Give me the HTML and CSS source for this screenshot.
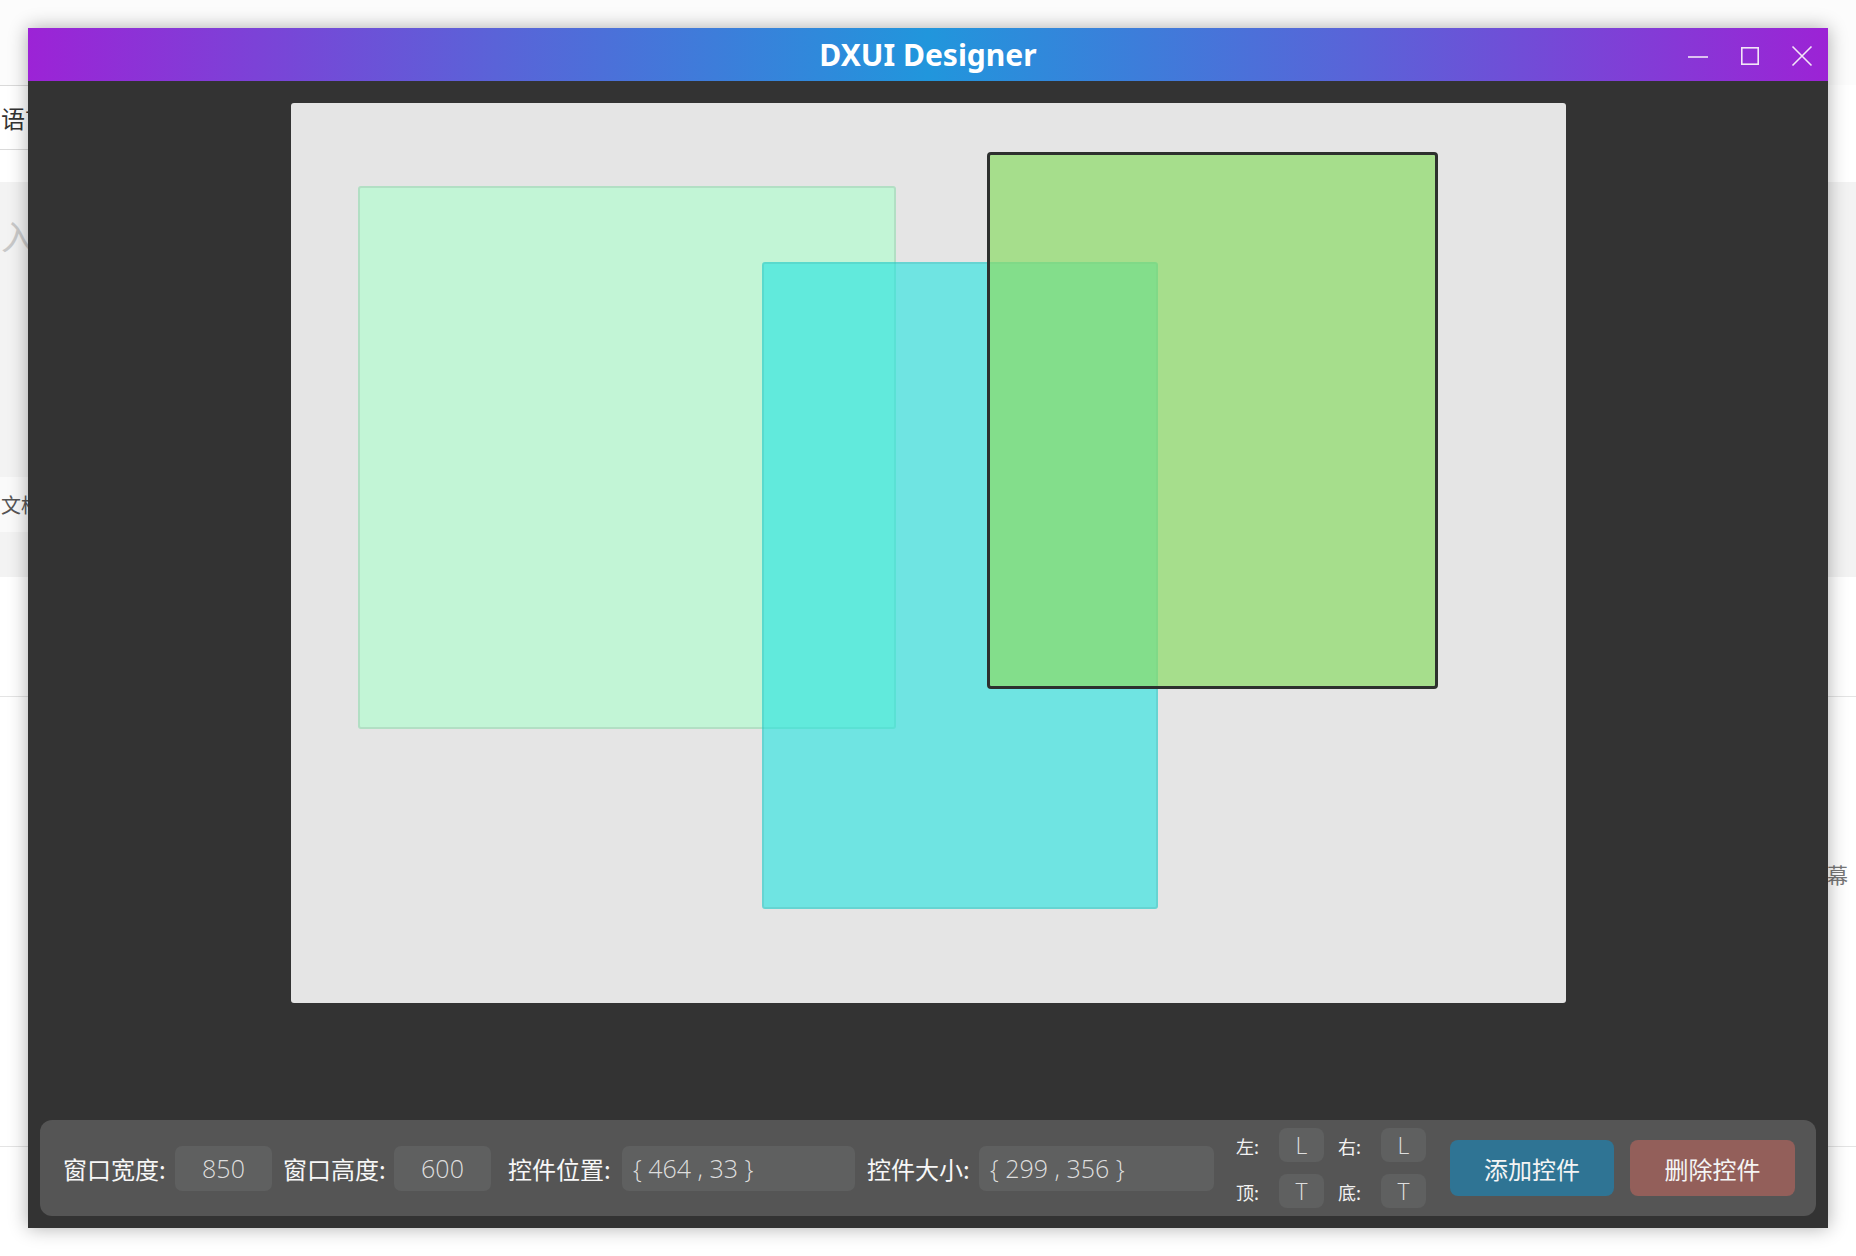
FILE: index.html
```html
<!DOCTYPE html>
<html lang="zh">
<head>
<meta charset="utf-8">
<title>DXUI Designer</title>
<link rel="stylesheet" href="styles.css">
</head>
<body>
<div class="page">
  <div class="pg-top"></div>
  <div class="pg-lang"><span>语言</span></div>
  <div class="pg-gap"></div>
  <div class="pg-hero">
    <div class="pg-hero-title">入</div>
    <div class="pg-doc"><span>文档</span></div>
  </div>
  <div class="pg-mid"></div>
  <div class="pg-list"><span>屏幕</span></div>
  <div class="pg-foot"></div>
</div>

<div class="window">
  <div class="titlebar">
    <div class="tb-spacer"></div>
    <div class="tb-title">DXUI Designer</div>
    <div class="tb-buttons">
      <div class="tb-btn">
        <svg width="22" height="20" viewBox="0 0 22 20"><line x1="1" y1="11" x2="21" y2="11" stroke="#f3e6f7" stroke-width="1.6"/></svg>
      </div>
      <div class="tb-btn">
        <svg width="20" height="20" viewBox="0 0 20 20"><rect x="1.8" y="1.8" width="16.4" height="16.4" fill="none" stroke="#f3e6f7" stroke-width="1.6"/></svg>
      </div>
      <div class="tb-btn">
        <svg width="22" height="22" viewBox="0 0 22 22"><path d="M1.5 1.5 L20.5 20.5 M20.5 1.5 L1.5 20.5" stroke="#f3e6f7" stroke-width="1.6" fill="none"/></svg>
      </div>
    </div>
  </div>

  <div class="content">
    <div class="stage">
      <div class="canvas">
        <div class="ctl ctl-a"></div>
        <div class="ctl ctl-b"></div>
        <div class="ctl ctl-c"></div>
      </div>
    </div>

    <div class="panel">
      <div class="lbl lbl-1">窗口宽度:</div>
      <div class="field field-sm">850</div>
      <div class="lbl lbl-2">窗口高度:</div>
      <div class="field field-sm">600</div>
      <div class="lbl lbl-3">控件位置:</div>
      <div class="field field-lg">{ 464 , 33 }</div>
      <div class="lbl lbl-4">控件大小:</div>
      <div class="field field-lg field-lg2">{ 299 , 356 }</div>
      <div class="anchors">
        <div class="a-lbl">左:</div>
        <div class="a-box">L</div>
        <div class="a-lbl a-lbl-r">右:</div>
        <div class="a-box">L</div>
        <div class="a-lbl">顶:</div>
        <div class="a-box">T</div>
        <div class="a-lbl a-lbl-r">底:</div>
        <div class="a-box">T</div>
      </div>
      <div class="btn btn-add">添加控件</div>
      <div class="btn btn-del">删除控件</div>
    </div>
  </div>
</div>
</body>
</html>
```

FILE: styles.css
```css
* {
  box-sizing: border-box;
  margin: 0;
  padding: 0;
}

html, body {
  width: 1856px;
  height: 1256px;
  overflow: hidden;
}

body {
  background: #ffffff;
  font-family: "Noto Sans", "Noto Sans CJK SC", sans-serif;
  position: relative;
}

/* ---------- background web page ---------- */
.page {
  width: 1856px;
  height: 1256px;
  display: flex;
  flex-direction: column;
}

.pg-top {
  height: 85px;
  background: #fcfcfc;
}

.pg-lang {
  width: 600px;
  height: 65px;
  border-top: 1px solid #dadada;
  border-bottom: 1px solid #dadada;
  display: flex;
  align-items: center;
  padding-left: 1px;
}

.pg-lang span {
  font-family: "Noto Sans CJK SC", sans-serif;
  font-size: 24px;
  color: #333;
  white-space: nowrap;
}

.pg-gap {
  height: 32px;
}

.pg-hero {
  height: 395px;
  background: #f3f3f3;
  display: flex;
  flex-direction: column;
  padding-top: 30px;
}

.pg-hero-title {
  font-family: "Noto Sans CJK SC", sans-serif;
  font-size: 34px;
  line-height: 48px;
  color: #c9c9c9;
  padding-left: 1px;
  white-space: nowrap;
}

.pg-doc {
  margin-top: 217px;
  width: 420px;
  height: 55px;
  background: #fafafa;
  display: flex;
  align-items: center;
}

.pg-doc span {
  font-family: "Noto Sans CJK SC", sans-serif;
  font-size: 20px;
  color: #555;
  padding-left: 1px;
  white-space: nowrap;
}

.pg-mid {
  height: 119px;
}

.pg-list {
  height: 450px;
  border-top: 1px solid #e4e4e4;
  padding-top: 162px;
  padding-left: 1806px;
  white-space: nowrap;
}

.pg-list span {
  font-family: "Noto Sans CJK SC", sans-serif;
  font-size: 21px;
  line-height: 30px;
  color: #777;
}

.pg-foot {
  flex: 1;
  border-top: 1px solid #e4e4e4;
}

/* ---------- designer window ---------- */
.window {
  position: absolute;
  left: 28px;
  top: 28px;
  width: 1800px;
  height: 1200px;
  display: flex;
  flex-direction: column;
  box-shadow: 0 0 18px rgba(0, 0, 0, 0.32);
}

.titlebar {
  height: 53px;
  flex: none;
  display: grid;
  grid-template-columns: 1fr auto 1fr;
  align-items: center;
  background: linear-gradient(90deg, #9c23d6 0%, #5a63d8 26%, #2196dc 50%, #5a63d8 74%, #9c23d5 100%);
}

.tb-title {
  font-family: "Noto Sans", "Open Sans", sans-serif;
  font-weight: 700;
  font-size: 30px;
  color: #ffffff;
  line-height: 53px;
}

.tb-buttons {
  display: flex;
  justify-content: flex-end;
  height: 53px;
}

.tb-btn {
  width: 52px;
  height: 53px;
  display: flex;
  align-items: center;
  justify-content: center;
  padding-top: 2px;
}

.content {
  flex: 1;
  background: #333333;
  display: flex;
  flex-direction: column;
}

.stage {
  flex: 1;
  display: flex;
  justify-content: center;
  padding-top: 22px;
}

.canvas {
  width: 1275px;
  height: 900px;
  background: #e5e5e5;
  border-radius: 3px;
  position: relative;
}

.ctl {
  position: absolute;
  border-radius: 3px;
}

.ctl-a {
  left: 67px;
  top: 83px;
  width: 538px;
  height: 543px;
  background: #c2f5d6;
  border: 2px solid rgba(100, 110, 105, 0.16);
}

.ctl-b {
  left: 471px;
  top: 159px;
  width: 396px;
  height: 647px;
  background: rgba(32, 226, 224, 0.6);
  border: 2px solid rgba(40, 100, 100, 0.12);
}

.ctl-c {
  left: 696px;
  top: 49px;
  width: 451px;
  height: 537px;
  background: rgba(139, 220, 103, 0.7);
  border: 3px solid #2d302e;
  border-radius: 4px;
}

/* ---------- bottom panel ---------- */
.panel {
  flex: none;
  height: 96px;
  margin: 0 12px 12px 12px;
  background: #555555;
  border-radius: 12px;
  display: flex;
  align-items: center;
  padding: 0 22px 0 23px;
}

.lbl {
  font-family: "Noto Sans CJK SC", sans-serif;
  font-size: 24px;
  color: #f7f7f7;
  white-space: nowrap;
  width: 101px;
  flex: none;
}

.lbl-2 { margin-left: 11px; width: 100px; }
.lbl-3 { margin-left: 17px; width: 102px; }
.lbl-4 { margin-left: 12px; width: 102px; }

.field {
  flex: none;
  height: 45px;
  background: #5f6060;
  border-radius: 7px;
  display: flex;
  align-items: center;
  font-family: "Open Sans", "Noto Sans", sans-serif;
  font-weight: 300;
  font-size: 25px;
  color: #dedede;
  white-space: nowrap;
  margin-left: 11px;
}

.field-sm {
  width: 97px;
  justify-content: center;
}

.field-lg {
  width: 233px;
  padding-left: 11px;
  margin-left: 12px;
}

.field-lg2 {
  width: 235px;
  margin-left: 10px;
}

.anchors {
  flex: none;
  margin-left: 22px;
  display: grid;
  grid-template-columns: 43px 45px 57px 45px;
  grid-template-rows: 34px 34px;
  row-gap: 12px;
  align-items: center;
}

.a-lbl {
  font-family: "Noto Sans CJK SC", sans-serif;
  font-size: 18px;
  color: #f2f2f2;
  white-space: nowrap;
  padding-top: 1px;
}

.a-lbl-r {
  padding-left: 14px;
}

.a-box {
  height: 34px;
  background: #5f6060;
  border-radius: 8px;
  display: flex;
  align-items: center;
  justify-content: center;
  font-family: "Open Sans", "Noto Sans", sans-serif;
  font-weight: 300;
  font-size: 23px;
  color: #dedede;
}

.btn {
  flex: none;
  height: 56px;
  border-radius: 8px;
  display: flex;
  align-items: center;
  justify-content: center;
  font-family: "Noto Sans CJK SC", sans-serif;
  font-size: 24px;
  color: #f4f4f4;
  white-space: nowrap;
}

.btn-add {
  width: 164px;
  margin-left: 24px;
  background: #2f7494;
}

.btn-del {
  width: 165px;
  margin-left: 16px;
  background: #935f5a;
}
```
